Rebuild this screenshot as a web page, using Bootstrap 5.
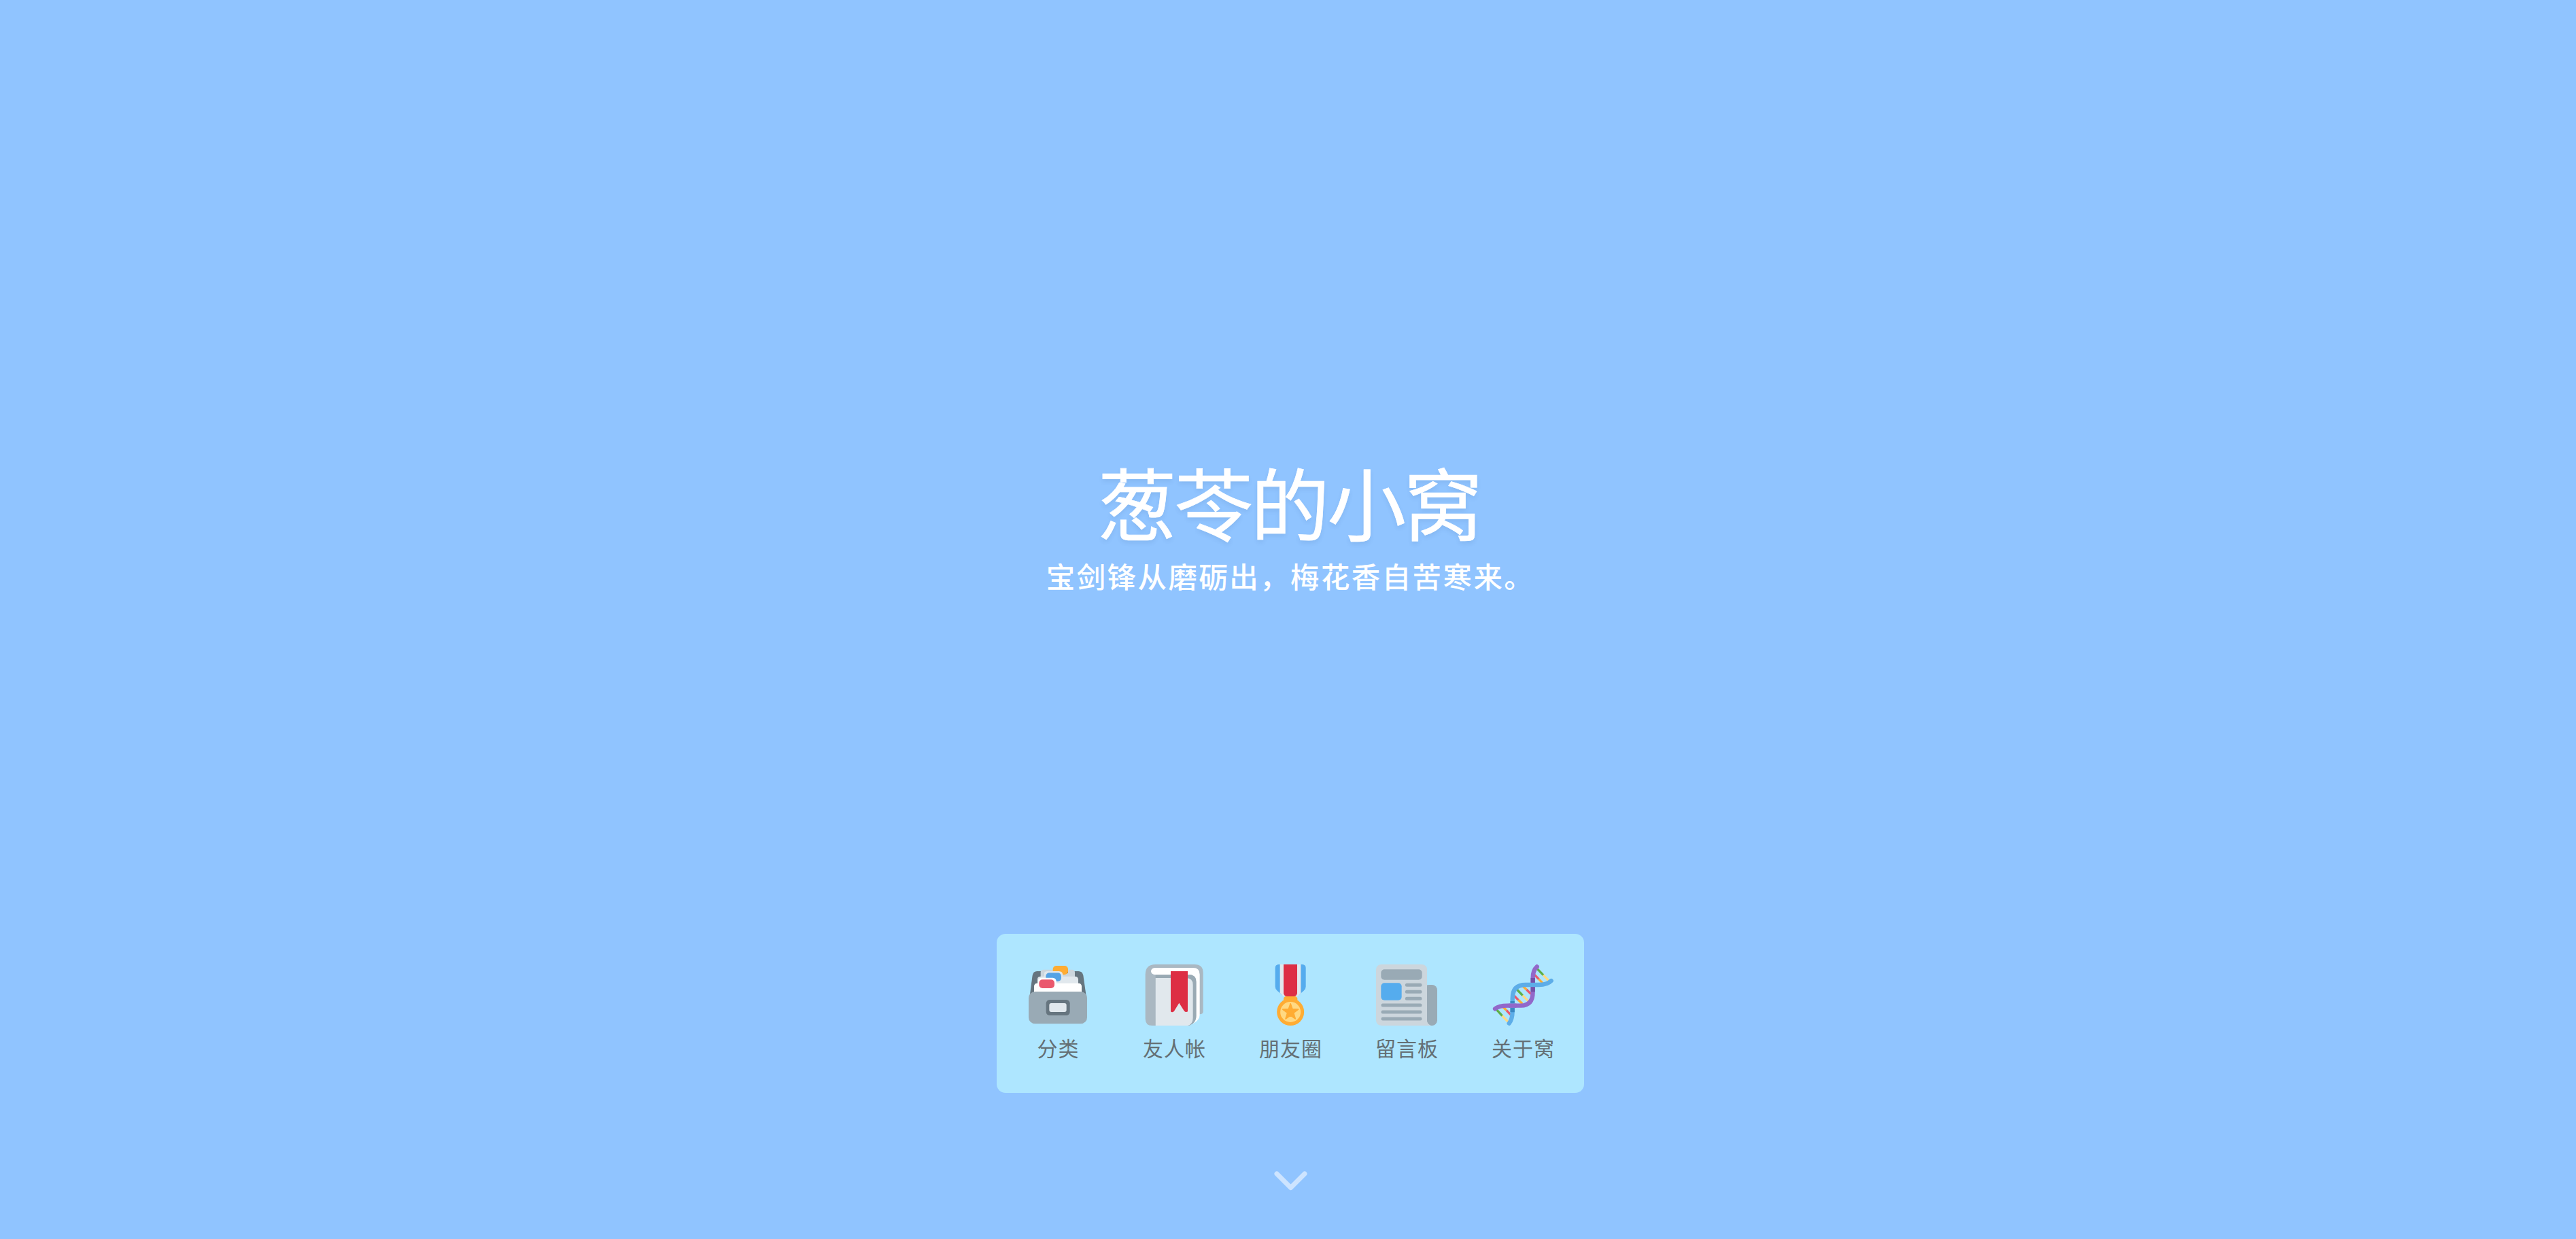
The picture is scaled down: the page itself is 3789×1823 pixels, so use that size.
<!DOCTYPE html>
<html lang="zh-CN">
<head>
<meta charset="utf-8">
<meta name="viewport" content="width=device-width, initial-scale=1">
<title>葱苓的小窝</title>
<link href="https://cdn.jsdelivr.net/npm/bootstrap@5.3.0/dist/css/bootstrap.min.css" rel="stylesheet">
<style>
html, body { height: 100%; }
body { background: #90c4ff; font-family: "Noto Sans CJK SC", "Noto Sans", sans-serif; overflow: hidden; }
.cover { height: 1823px; padding: 676px 0 0 7px; }
.cover-title { font-size: 116px; line-height: 120px; font-weight: 400; letter-spacing: -3.5px; margin-left: -4px; -webkit-text-stroke: .7px #fff; text-shadow: 0 4px 6px rgba(40, 80, 130, .1); }
.cover-sub { font-size: 42.5px; line-height: 60px; letter-spacing: 2.4px; font-weight: 500; margin-top: 21px; white-space: nowrap; }
.dock { width: 864px; height: 234px; margin-top: 497px; padding: 45px 4.5px 0; border-radius: 13px; background: #aee6ff; }
.dock-item { width: 171px; color: #646f74; }
.dock-item svg { width: 90px; height: 90px; display: block; }
.dock-item span { font-size: 30px; line-height: 40px; letter-spacing: 1px; margin: 12px 0 0 1px; white-space: nowrap; }
.scroll-cue { margin-top: 109px; width: 54px; height: 36px; display: block; }
</style>
</head>
<body>
<main class="cover d-flex flex-column align-items-center">
  <h1 class="cover-title text-white mb-0">葱苓的小窝</h1>
  <p class="cover-sub text-white mb-0">宝剑锋从磨砺出，梅花香自苦寒来。</p>
  <nav class="dock d-flex justify-content-center">
    <a class="dock-item d-flex flex-column align-items-center text-decoration-none" href="#">
      <svg viewBox="63 57 270 270" aria-hidden="true">
        <path fill="#66757f" d="M74 196 86 105Q90 87 106 87H289Q306 87 310 105L323 196Z"/>
        <path fill="#ccd6dd" d="M122 180V92Q122 82 133 80H175L182 96H243V80H262Q273 82 273 92V180Z"/>
        <rect x="176" y="63" width="67" height="39" rx="15" fill="#ffac33"/>
        <path fill="#e1e8ed" d="M108 180V122Q108 110 122 110H138V95Q140 88 152 87H203Q218 88 219 100V110H274Q288 110 288 124V180Z"/>
        <rect x="145" y="94" width="68" height="38" rx="15" fill="#55a3e5"/>
        <path fill="#fff" d="M93 184V154Q93 140 107 140H110V130Q111 117 126 116H176Q190 118 191 130V140H289Q303 140 303 154V184Z"/>
        <rect x="115" y="124" width="68" height="38" rx="15" fill="#ea596e"/>
        <rect x="69" y="177" width="258" height="142" rx="28" fill="#99aab5"/>
        <rect x="146" y="213" width="105" height="69" rx="16" fill="#66757f"/>
        <rect x="160" y="228" width="76" height="39" rx="9" fill="#e1e8ed"/>
      </svg>
      <span>分类</span>
    </a>
    <a class="dock-item d-flex flex-column align-items-center text-decoration-none" href="#">
      <svg viewBox="66 57 270 270" aria-hidden="true">
        <path fill="#aab8c2" d="M119 57H291Q329 57 329 94V266Q329 276 314 277L270 327H104Q74 327 74 297V102Q74 57 119 57Z"/>
        <path fill="#fff" d="M116 72H285Q314 72 314 101V279Q314 303 284 319L278 102H115Q100 101 99 87Q100 73 116 72Z"/>
        <path fill="#9aaab4" d="M119 102H268Q299 103 299 134V282Q299 319 263 327H119Z"/>
        <path fill="#e1e8ed" d="M119 117H254Q284 117 284 147V293Q284 320 261 327H119Z"/>
        <path fill="#dd2e44" d="M186 87H261V265Q253 270 246 263L223 227L201 263Q193 271 186 265Z"/>
      </svg>
      <span>友人帐</span>
    </a>
    <a class="dock-item d-flex flex-column align-items-center text-decoration-none" href="#">
      <svg viewBox="69 57 270 270" aria-hidden="true">
        <path fill="#55acee" d="M152 57H257Q272 58 272 72V155Q272 166 263 173L241 192H168L146 173Q137 166 137 155V72Q137 58 152 57Z"/>
        <path fill="#e1e8ed" d="M158 57H250V184L235 198H174L158 183Z"/>
        <path fill="#ffac33" d="M174 207Q176 198 188 197H222Q233 198 235 207V225H174Z"/>
        <path fill="#dd2e44" d="M174 57H234V184Q232 198 219 198H189Q176 198 174 184Z"/>
        <circle cx="204.500" cy="267" r="60" fill="#ffac33"/>
        <circle cx="204.500" cy="267" r="45" fill="#ffd983"/>
        <path fill="#ffac33" stroke="#ffac33" stroke-width="5" stroke-linejoin="round" d="M204.500 230 213 254 239 255 218 271 226 297 204.500 282 183 297 191 271 170 255 196 254Z"/>
      </svg>
      <span>朋友圈</span>
    </a>
    <a class="dock-item d-flex flex-column align-items-center text-decoration-none" href="#">
      <svg viewBox="72 57 270 270" aria-hidden="true">
        <rect x="282" y="147" width="60" height="180" rx="23" fill="#99aab5"/>
        <path fill="#ccd6dd" d="M96 57H273Q297 58 297 81V304Q299 322 315 327H96Q73 326 72 304V81Q73 58 96 57Z"/>
        <path fill="#99aab5" d="M297 160V304Q299 322 319 327L330 320V160Z"/>
        <rect x="94" y="79" width="181" height="46" rx="15" fill="#99aab5"/>
        <rect x="94" y="139" width="91" height="76" rx="15" fill="#55acee"/>
        <g stroke="#99aab5" stroke-width="15" stroke-linecap="round">
          <path d="M208 147.500H267M208 177.500H267M208 207.500H267M102 237H267M102 267H267M102 297H267"/>
        </g>
      </svg>
      <span>留言板</span>
    </a>
    <a class="dock-item d-flex flex-column align-items-center text-decoration-none" href="#">
      <svg viewBox="75 57 270 270" aria-hidden="true" fill="none" stroke-width="10">
        <path stroke="#5faf47" d="M273 76 300 104M184 168 209 194M94 257 119 284"/>
        <path stroke="#ffd983" d="M300 104 324 129M209 194 235 220M119 284 145 311"/>
        <path stroke="#ea596e" d="M262 103 280 122M226 168 246 188M171 195 190 214M137 259 156 279"/>
        <path stroke="#ffac33" d="M280 122 297 139M209 152 226 168M190 214 208 231M120 243 137 259"/>
        <g stroke-width="19" stroke-linecap="round">
          <path stroke="#9268ca" d="M272 67Q254 83 254 116V178Q254 239 201 239H147Q106 238 87 253"/>
          <path stroke="#5dade8" d="M149 317Q164 299 164 263V207Q164 147 222 147H280Q318 147 335 129"/>
        </g>
        <path stroke="#7450a8" stroke-width="19" d="M254 117V137M254 157V178"/>
        <path stroke="#3b88c3" stroke-width="19" d="M164 219V229M164 249V268"/>
        <path stroke="#9268ca" stroke-width="19" d="M147 239H181"/>
      </svg>
      <span>关于窝</span>
    </a>
  </nav>
  <svg class="scroll-cue" viewBox="0 0 54 36" aria-label="向下滚动">
    <path d="M7 10 27.500 30.500 48 10" fill="none" stroke="#cde4ff" stroke-width="7" stroke-linecap="round" stroke-linejoin="round"/>
  </svg>
</main>
<script src="https://cdn.jsdelivr.net/npm/bootstrap@5.3.0/dist/js/bootstrap.bundle.min.js"></script>
</body>
</html>
